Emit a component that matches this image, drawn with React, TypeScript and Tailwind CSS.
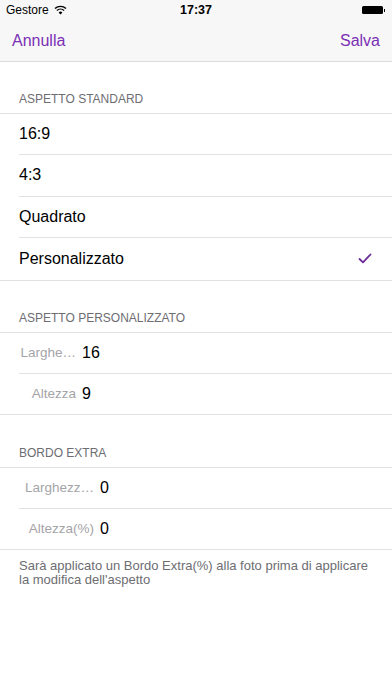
import React from "react";

const purple = "text-[#7b2fb5]";

function SectionHeader({ title, className = "" }: { title: string; className?: string }) {
  return (
    <div className={`flex items-end px-[19px] pb-[7px] ${className}`}>
      <span className="text-[12px] leading-[14px] text-[#6d6d72]">{title}</span>
    </div>
  );
}

function Row({ children, last }: { children: React.ReactNode; last?: boolean }) {
  return (
    <div className={last ? "border-b border-[#e2e2e4]" : "pl-[19px]"}>
      <div
        className={`flex h-[41.5px] items-center ${
          last ? "pl-[19px]" : "border-b border-[#e2e2e4]"
        } pr-[20px]`}
      >
        {children}
      </div>
    </div>
  );
}

function FieldRow({
  label,
  value,
  labelWidth,
  last,
}: {
  label: string;
  value: string;
  labelWidth: string;
  last?: boolean;
}) {
  return (
    <div className={last ? "border-b border-[#e2e2e4]" : "pl-[19px]"}>
      <div
        className={`flex h-[40.5px] items-center ${
          last ? "pl-[19px]" : "border-b border-[#e2e2e4]"
        }`}
      >
        <span
          className={`${labelWidth} shrink-0 text-right text-[13.5px] text-[#a4a4a8]`}
        >
          {label}
        </span>
        <span className="ml-[6px] text-[16px] text-black">{value}</span>
      </div>
    </div>
  );
}

export default function App() {
  return (
    <div className="min-h-[696px] w-[392px] bg-white font-['Liberation_Sans',Arial,sans-serif] text-black">
      <div className="bg-[#f7f7f7]">
        <div className="relative flex h-[20px] items-center px-[6px] text-[12px]">
          <span>Gestore</span>
          <svg className="ml-[5px]" width="13" height="10" viewBox="0 0 13 10">
            <path d="M6.5 9.5 L4.6 7.4 A2.8 2.8 0 0 1 8.4 7.4 Z" fill="#000" />
            <path d="M2.9 5.6 A5.2 5.2 0 0 1 10.1 5.6" stroke="#000" strokeWidth="1.4" fill="none" />
            <path d="M1 3.6 A7.8 7.8 0 0 1 12 3.6" stroke="#000" strokeWidth="1.4" fill="none" />
          </svg>
          <span className="absolute left-1/2 -translate-x-1/2 text-[12.5px] font-bold">17:37</span>
          <div className="ml-auto mr-[1px] flex items-center">
            <div className="h-[8px] w-[21px] rounded-[1.5px] bg-black" />
            <div className="ml-[1px] h-[3px] w-[1.5px] bg-black" />
          </div>
        </div>
        <div className="flex h-[42px] items-center justify-between border-b border-[#dcdcde] px-[12px] text-[16px]">
          <span className={purple}>Annulla</span>
          <span className={purple}>Salva</span>
        </div>
      </div>

      <SectionHeader title="ASPETTO STANDARD" className="h-[51.5px] border-b border-[#e2e2e4]" />
      <Row>
        <span className="text-[16px]">16:9</span>
      </Row>
      <Row>
        <span className="text-[16px]">4:3</span>
      </Row>
      <Row>
        <span className="text-[16px]">Quadrato</span>
      </Row>
      <Row last>
        <span className="text-[16px]">Personalizzato</span>
        <svg className="ml-auto" width="14" height="11" viewBox="0 0 14 11">
          <path
            d="M1.5 6 L5 9.3 L12.5 1.5"
            stroke="#6a2a98"
            strokeWidth="1.8"
            fill="none"
            strokeLinecap="round"
            strokeLinejoin="round"
          />
        </svg>
      </Row>

      <SectionHeader title="ASPETTO PERSONALIZZATO" className="h-[52.5px] border-b border-[#e2e2e4]" />
      <FieldRow label="Larghe…" value="16" labelWidth="w-[57px]" />
      <FieldRow label="Altezza" value="9" labelWidth="w-[57px]" last />

      <SectionHeader title="BORDO EXTRA" className="h-[53px] border-b border-[#e2e2e4]" />
      <FieldRow label="Larghezz…" value="0" labelWidth="w-[75px]" />
      <FieldRow label="Altezza(%)" value="0" labelWidth="w-[75px]" last />

      <p className="px-[19px] pt-[9px] text-[13px] leading-[14px] text-[#6d6d72]">
        Sarà applicato un Bordo Extra(%) alla foto prima di applicare la modifica dell'aspetto
      </p>
    </div>
  );
}
